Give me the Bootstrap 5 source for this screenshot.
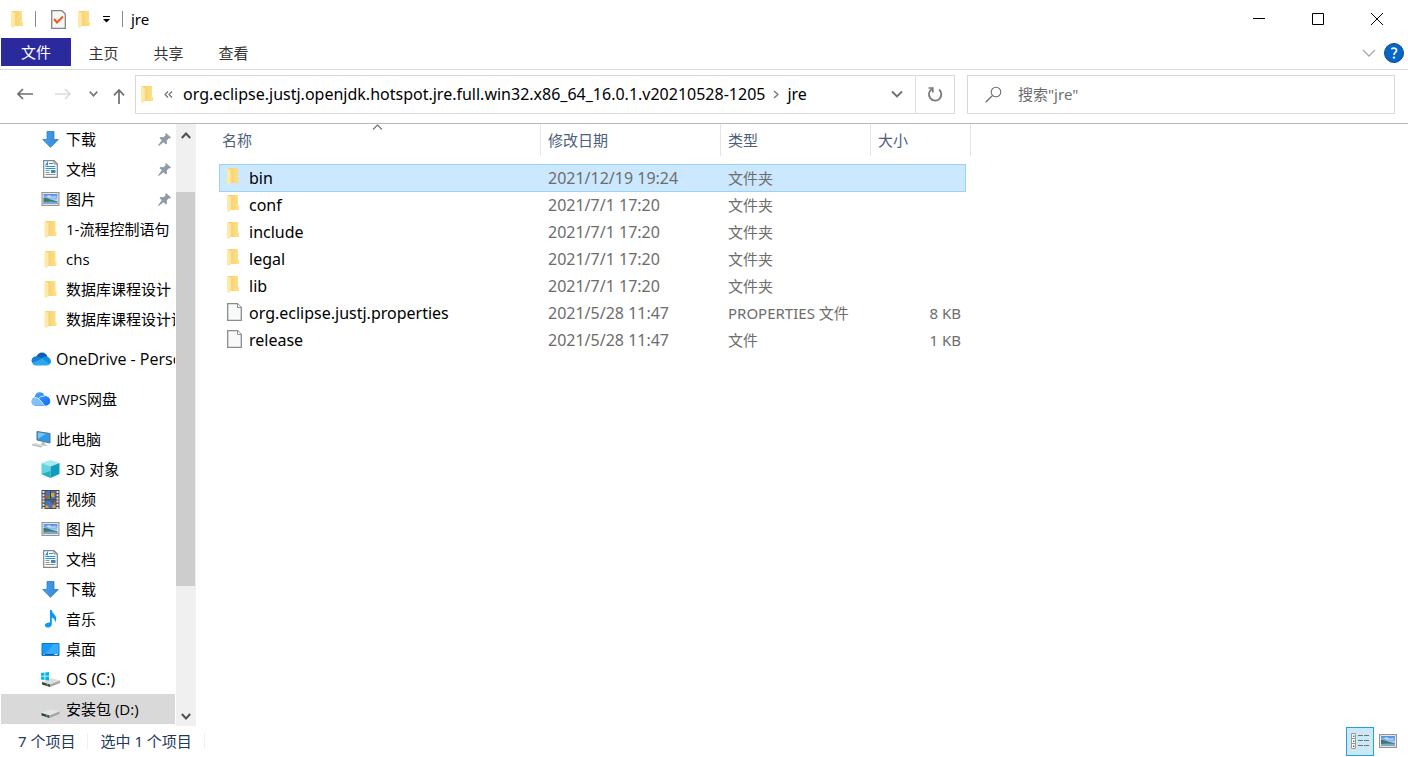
<!DOCTYPE html>
<html lang="zh-CN">
<head>
<meta charset="utf-8">
<meta name="viewport" content="width=device-width, initial-scale=1">
<title>jre</title>
<link rel="stylesheet" href="https://cdn.jsdelivr.net/npm/bootstrap@5.3.0/dist/css/bootstrap.min.css">
<script src="https://cdn.jsdelivr.net/npm/bootstrap@5.3.0/dist/js/bootstrap.bundle.min.js"></script>
<style>
body { font-family: "Noto Sans", "Noto Sans CJK SC", sans-serif; font-size: 15px; line-height: 20px; color: #000; background: #fff; overflow: hidden; }
svg { display: block; flex: none; }
button, input { font: inherit; color: inherit; }
.plain-btn { border: 0; padding: 0; background: none; display: flex; align-items: center; justify-content: center; }
.title-bar { height: 38px; padding-left: 10px; padding-right: 2px; }
.v-bar { width: 1px; height: 16px; background: #8a8a8a; }
.gap-a { margin-left: 11px; }
.gap-b { margin-left: 15px; }
.win-btn { width: 59px; height: 38px; }
.ribbon { height: 32px; padding-left: 1px; padding-right: 4px; border-bottom: 1px solid #dadbdc; }
.tab-link { height: 31px; padding-top: 5px; width: 65px; text-align: center; color: #333; text-decoration: none; }
.file-tab { background: #2a2a9c; color: #fff; width: 70px; height: 28px; padding-top: 4px; }
.ribbon-end { height: 30px; }
.nav-row { height: 54px; padding: 5px 13px 10px 12px; border-bottom: 1px solid #b9b9b9; }
.nav-back { width: 26px; } .nav-fwd { width: 50px; } .nav-recent { width: 11px; } .nav-up { width: 36px; }
.boxed { border: 1px solid #d9d9d9; height: 39px; }
.addr { width: 820px; }
.addr a { color: #000; text-decoration: none; }
.addr .crumb { margin-left: 10px; }
.latin { font-size: 16px; }
.refresh { width: 39px; border-left: 1px solid #d9d9d9; }
.search-box { margin-left: 12px; padding-left: 17px; gap: 16px; }
.search-input { border: 0; outline: 0; padding: 0; background: none; }
.search-input::placeholder { color: #6d6d6d; opacity: 1; }
.side { width: 175px; font-family: "Open Sans", "Noto Sans CJK SC", sans-serif; }
.side a { display: flex; align-items: center; height: 30px; padding-left: 40px; margin-left: 1px; color: #000; text-decoration: none; white-space: nowrap; overflow: hidden; }
.side a span { margin-left: 6px; }
.side a.root { padding-left: 30px; margin-top: 10px; }
.side a.root span { margin-left: 5px; }
.side a.current { background: #d9d9d9; }
.side .pin { margin-left: auto; margin-right: 4px; }
.scroller { width: 20px; margin: 0 0 1px 1px; padding: 8px 1px 6px 0; background: #f0f0f0; }
.thumb { background: #cdcdcd; height: 67%; margin-top: 53px; }
.pane { padding-left: 23px; }
.files { table-layout: fixed; width: 752px; border-collapse: separate; border-spacing: 0; }
.files th { height: 32px; padding: 0 0 0 7px; font-weight: 400; color: #4c607a; border-right: 1px solid #e5e5e5; }
.files th:first-child { padding-left: 3px; position: relative; }
.sort-mark { position: absolute; left: 153px; top: 0; }
.files td { height: 27px; padding: 0 0 0 7px; color: #6d6d6d; }
.files td:first-child { color: #000; padding-left: 8px; }
.files td:first-child svg { width: 15px; margin-right: 7px; }
.files td:first-child .fold { width: 12px; margin-right: 10px; }
.files td:first-child, .files td:nth-child(2) { font-size: 16px; }
.files td.size { text-align: right; padding: 0 5px 0 0; }
.files .gap td { height: 8px; }
.files .picked td { background: #cce8ff; box-shadow: inset 0 1px #99d1ff, 0 1px #99d1ff; }
.files .picked td:first-child { box-shadow: inset 0 1px #99d1ff, 0 1px #99d1ff, inset 1px 0 #99d1ff; }
.files .picked td.size { box-shadow: inset 0 1px #99d1ff, 0 1px #99d1ff, inset -1px 0 #99d1ff; }
.files .picked td.blank { background: none; box-shadow: none; }
.c-name { width: 322px; } .c-date { width: 180px; } .c-type { width: 150px; } .c-size { width: 95px; } .c-end { width: 5px; }
.status { height: 30px; color: #1e395b; padding: 0 10px 2px 18px; gap: 12px; }
.status .sep { width: 1px; height: 16px; background: #f0f0f0; }
.view-btn { width: 28px; height: 29px; }
.view-btn.on { background: #cbe8f6; border: 1px solid #26a0da; }
.thumb-btn { width: 24px; padding-left: 4px; }
</style>
</head>
<body class="vh-100 d-flex flex-column">
<svg width="0" height="0" class="position-absolute">
  <defs>
    <linearGradient id="gf" x2="1"><stop offset="0" stop-color="#f3cf6b"/><stop offset="1" stop-color="#ffe08a"/></linearGradient>
    <linearGradient id="gs" x2="0" y2="1"><stop offset="0" stop-color="#4d8fe8"/><stop offset="1" stop-color="#dff0fb"/></linearGradient>
    <linearGradient id="gd" x2="1"><stop offset="0" stop-color="#4ba3ee"/><stop offset="1" stop-color="#2f86d6"/></linearGradient>
    <linearGradient id="gw" x2="1" y2="1"><stop offset="0" stop-color="#4da9ff"/><stop offset="1" stop-color="#0f6df0"/></linearGradient>
  </defs>
  <symbol id="folder" viewBox="0 0 12 17"><path d="M1 0h10v11h1v4H1z" fill="url(#gf)"/><path d="M0 0l4 2v13l-2 2-2-1z" fill="#ffe9a6"/><path d="M4 2v13" stroke="#f7dc8c" stroke-width="1"/></symbol>
  <symbol id="page" viewBox="0 0 15 18"><path d="M.7.7h9.800l3.800 3.800v12.800H.7z" fill="#f8f9f9" stroke="#8c8c8c" stroke-width="1.300"/><path d="M10.500.7v3.800h3.800" fill="#fff" stroke="#8c8c8c"/></symbol>
  <symbol id="down" viewBox="0 0 17 17"><path d="M5 .5h7v8h4.300L8.500 16.300.7 8.500H5z" fill="url(#gd)" stroke="#2b7fca" stroke-width=".8"/></symbol>
  <symbol id="doc" viewBox="0 0 15 18"><path d="M.7.7h10.300l3.300 3.300v13.300H.7z" fill="#fff" stroke="#858585" stroke-width="1.200"/><path d="M11 .7V4h3.300" fill="none" stroke="#858585"/><path d="M2.500 5.500L4.500 2.500V5.500M6 3.500h4M2.500 6.500h10M2.500 8.500h10" stroke="#2196e0" stroke-width="1.100" fill="none"/><path d="M2.500 10.500h4M2.500 12.500h4M2.500 14.500h10" stroke="#8b9298"/><path d="M8 10h4.500v3H8z" fill="#3f86ac"/></symbol>
  <symbol id="pic" viewBox="0 0 18 14"><path d="M.6.6h16.800v12.800H.6z" fill="#fff" stroke="#949494" stroke-width="1.200"/><path d="M2 2h14v10H2z" fill="url(#gs)"/><path d="M2 6q4-.5 7 1.500l7 2V12H2z" fill="#44776f"/><path d="M2 10q6-1 14 0v2H2z" fill="#7ba9c8"/><path d="M5 4.500q2-2 4-.5t5 0v1.500H7z" fill="#fff" opacity=".65"/></symbol>
  <symbol id="pin" viewBox="0 0 13 13"><path d="M8 0l5 4.500-1.200 1-1-.3-2 2.300.2 3L8 11.500 5.600 9.200 1 12.800l-1 .2.300-1L3.800 7.300 1.500 5l1-1 3 .2 2.200-2L7.200.9z" fill="#8d9ba8"/></symbol>
  <symbol id="onedrive" viewBox="0 0 20 14"><path d="M5 5Q8-1 13 .8 16 2 16.500 5L10 9z" fill="#0a5fb4"/><path d="M1.500 11Q-1 7 3 4.800q2-1 4.500 0L13 8 3 13z" fill="#1680d8"/><path d="M10 7q3-3.500 7-2 3 1.500 3 5-1 3-3 3l-7-4z" fill="#1490df"/><path d="M1.500 11L11 6.500l7.500 5.500q-1 1.500-3 1.500h-11q-2 0-3-2.500z" fill="#2ba9ec"/></symbol>
  <symbol id="wps" viewBox="0 0 19 14"><path d="M3 5.500Q4 0 8.500.2 12 .5 13 4q5 0 5.800 4.500.2 4.500-4.500 5.200H4Q0 13 .1 9.500.5 6 3 5.500z" fill="url(#gw)"/><path d="M3 5.500q4-.2 6 3l4 5H4Q0 13 .1 9.500.5 6 3 5.500z" fill="#7fc0ff"/><path d="M3 5.500q4-.2 6 3l4 5M7 6.500q2-3 6-2.500" fill="none" stroke="#e4f3ff" stroke-width=".9"/></symbol>
  <symbol id="pc" viewBox="0 0 20 17"><path d="M6 .5l13 2v9.500l-13-3z" fill="#2f9ae6" stroke="#55718b"/><path d="M7 1.500l8 1.200-8 5z" fill="#74c6fb"/><path d="M11 10.500l3 .8v2l3 1-3 .7-4-1.500z" fill="#b9c2ca"/><path d="M0 13.500l4-1.500 10 2.500-4 2z" fill="#d4d9dd"/><path d="M1 13.700l9 2.300" stroke="#aab2b8"/></symbol>
  <symbol id="cube" viewBox="0 0 18 18"><path d="M0 3l9-3 9 3-9 3.500z" fill="#a6eaf1"/><path d="M0 3l9 3.500V18L0 14z" fill="#62d3e0"/><path d="M18 3L9 6.500V18l9-4z" fill="#109dbd"/><path d="M0 14l9-3v7z" fill="#27aebf"/></symbol>
  <symbol id="film" viewBox="0 0 18 19"><path d="M0 0h18v19H0z" fill="#4d4d4d"/><path d="M2 1v18M16 1v18" stroke="#e6e6e6" stroke-width="2" stroke-dasharray="2 1.200"/><path d="M4 1h10v8H4zM4 10.500h10V18H4z" fill="#4474c4"/><path d="M9 3h4v4H9z" fill="#e3a51d"/><path d="M4 5h3v3H4z" fill="#d04b3a"/><path d="M7 6h3v3H7z" fill="#3aa35c"/><path d="M9 11h4v1l-2 2z" fill="#b72c25"/><path d="M4 15l3 1v2H4zM11 15h3v3h-3z" fill="#e3a51d"/><path d="M9 1v8" stroke="#202020" stroke-width=".7"/></symbol>
  <symbol id="note" viewBox="0 0 12 18"><path d="M5.500 0h1.800q.2 2.500 2.500 4.500 3.500 3 .8 8-.2-4-3.300-5v7.200Q6.500 17.500 3 17.500 0 17 .5 14.500q1.500-2.500 5-2z" fill="#0d99f2"/></symbol>
  <symbol id="desk" viewBox="0 0 18 13"><path d="M.5.500h17v12H.5z" fill="#149bf8" stroke="#0b78cc"/><path d="M12 1l5 0v10H4z" fill="#38acfb"/><path d="M1 11.500h16" stroke="#0b5c9e"/><path d="M2 11.500h1M13 11.500h3" stroke="#fff"/></symbol>
  <symbol id="drive" viewBox="0 0 18 9"><path d="M0 4l9-4 9 2.500-10 4z" fill="#e4e4e4"/><path d="M0 4l8 2.500V9L0 6.500z" fill="#3b403c"/><path d="M8 6.500l10-4V5L8 9z" fill="#a5a5a5"/><path d="M4.500 6.500l1.500.5" stroke="#45e04d" stroke-width="1.200"/></symbol>
  <symbol id="osdrive" viewBox="0 0 19 15"><g transform="translate(1 6)"><path d="M0 4l9-4 9 2.500-10 4z" fill="#dedede"/><path d="M0 4l8 2.500V9L0 6.500z" fill="#3b403c"/><path d="M8 6.500l10-4V5L8 9z" fill="#a5a5a5"/><path d="M4.500 6.500l1.500.5" stroke="#45e04d" stroke-width="1.200"/></g><path d="M0 1l3.500-.5v3.300H0zM4.300.4L8 0v3.800H4.300zM0 4.600h3.500v3.300L0 7.400zM4.300 4.600H8v3.800l-3.700-.5z" fill="#00b3f0"/></symbol>
</svg>

<header>
  <div class="title-bar d-flex align-items-center">
    <svg width="14" height="17"><use href="#folder"/></svg>
    <div class="v-bar gap-a"></div>
    <button class="plain-btn gap-b" aria-label="属性"><svg width="15" height="19" viewBox="0 0 15 19"><path d="M.7.7h10.300l3.300 3.300v14.300H.7z" fill="#f6f6f6" stroke="#858585" stroke-width="1.300"/><path d="M3 9l3 3.500 6-6" fill="none" stroke="#f0581c" stroke-width="2"/></svg></button>
    <button class="plain-btn gap-a" aria-label="新建文件夹"><svg width="14" height="17"><use href="#folder"/></svg></button>
    <button class="plain-btn gap-a" aria-label="自定义"><svg width="9" height="9" viewBox="0 0 9 9"><path d="M1 1.500h7" stroke="#000"/><path d="M1 4h7L4.500 7.500z"/></svg></button>
    <div class="v-bar gap-a"></div>
    <span class="ms-2">jre</span>
    <div class="ms-auto d-flex">
      <button class="plain-btn win-btn" aria-label="最小化"><svg width="12" height="12" viewBox="0 0 12 12"><path d="M0 5.500h12" stroke="#000"/></svg></button>
      <button class="plain-btn win-btn" aria-label="最大化"><svg width="12" height="12" viewBox="0 0 12 12"><path d="M.5.500h11v11H.5z" fill="none" stroke="#000"/></svg></button>
      <button class="plain-btn win-btn" aria-label="关闭"><svg width="12" height="12" viewBox="0 0 12 12"><path d="M0 0l12 12M12 0L0 12" stroke="#000"/></svg></button>
    </div>
  </div>
  <nav class="ribbon d-flex">
    <a href="#" class="tab-link file-tab">文件</a>
    <a href="#" class="tab-link">主页</a>
    <a href="#" class="tab-link">共享</a>
    <a href="#" class="tab-link">查看</a>
    <div class="ribbon-end ms-auto d-flex align-items-center gap-2">
      <button class="plain-btn" aria-label="展开功能区"><svg width="14" height="8" viewBox="0 0 14 8"><path d="M1 1l6 6 6-6" fill="none" stroke="#a9a9a9" stroke-width="1.300"/></svg></button>
      <button class="plain-btn" aria-label="帮助"><svg width="20" height="20" viewBox="0 0 20 20"><circle cx="10" cy="10" r="9.500" fill="#0667c8" stroke="#0b4f96"/><path d="M7.300 6q2.200-1.500 4.200-.5 2 1.500.3 3.500-1.800 1.300-1.800 3" fill="none" stroke="#fff" stroke-width="1.700"/><circle cx="10" cy="14.600" r="1.200" fill="#fff"/></svg></button>
    </div>
  </nav>
  <div class="nav-row d-flex align-items-center">
    <button class="plain-btn nav-back" aria-label="后退"><svg width="16" height="12" viewBox="0 0 16 12"><path d="M1 6h15M6 1L1 6l5 5" fill="none" stroke="#6f6f6f" stroke-width="1.700"/></svg></button>
    <button class="plain-btn nav-fwd" aria-label="前进"><svg width="16" height="12" viewBox="0 0 16 12"><path d="M0 6h15M10 1l5 5-5 5" fill="none" stroke="#dcdcdc" stroke-width="1.700"/></svg></button>
    <button class="plain-btn nav-recent" aria-label="最近位置"><svg width="9" height="6" viewBox="0 0 9 6"><path d="M.7.7l3.800 4L8.300.7" fill="none" stroke="#7a7a7a" stroke-width="1.700"/></svg></button>
    <button class="plain-btn nav-up" aria-label="上移"><svg class="mt-1 ms-1" width="12" height="15" viewBox="0 0 12 15"><path d="M6 15V1M1 6.300L6 1l5 5.300" fill="none" stroke="#6f6f6f" stroke-width="1.700"/></svg></button>
    <div class="boxed addr d-flex align-items-center">
      <svg class="ms-1" width="14" height="17"><use href="#folder"/></svg>
      <svg class="crumb" width="9" height="7" viewBox="0 0 9 7"><path d="M4 .5l-3 3 3 3M8 .5l-3 3 3 3" fill="none" stroke="#6f6f6f" stroke-width="1.200"/></svg>
      <a href="#" class="crumb latin">org.eclipse.justj.openjdk.hotspot.jre.full.win32.x86_64_16.0.1.v20210528-1205</a>
      <svg class="ms-2" width="6" height="9" viewBox="0 0 6 9"><path d="M1 1l4 3.500L1 8" fill="none" stroke="#7a7a7a" stroke-width="1.500"/></svg>
      <a href="#" class="ms-2 latin">jre</a>
      <button class="plain-btn ms-auto me-2 p-1" aria-label="以前的位置"><svg width="12" height="8" viewBox="0 0 12 8"><path d="M1 1.500l5 5 5-5" fill="none" stroke="#6f6f6f" stroke-width="1.800"/></svg></button>
      <button class="plain-btn refresh border-start align-self-stretch" aria-label="刷新"><svg width="16" height="16" viewBox="0 0 16 16"><path d="M12 3.500A6.200 6.200 0 1 1 5 3" fill="none" stroke="#7a7a7a" stroke-width="1.800"/><path d="M1.500 2h4.300v4.500" fill="none" stroke="#7a7a7a" stroke-width="1.700"/></svg></button>
    </div>
    <label class="boxed search-box flex-grow-1 d-flex align-items-center">
      <svg width="17" height="17" viewBox="0 0 17 17"><circle cx="11" cy="6" r="4.800" fill="none" stroke="#6f6f6f" stroke-width="1.100"/><path d="M7.500 9.500L.7 16.200" stroke="#6f6f6f" stroke-width="1.300"/></svg>
      <input class="search-input flex-grow-1" type="text" placeholder='搜索"jre"' aria-label="搜索">
    </label>
  </div>
</header>

<main class="flex-grow-1 d-flex overflow-hidden">
  <nav class="side">
    <a href="#"><svg width="19" height="17"><use href="#down"/></svg><span>下载</span><svg class="pin" width="13" height="13"><use href="#pin"/></svg></a>
    <a href="#"><svg width="19" height="18"><use href="#doc"/></svg><span>文档</span><svg class="pin" width="13" height="13"><use href="#pin"/></svg></a>
    <a href="#"><svg width="19" height="14"><use href="#pic"/></svg><span>图片</span><svg class="pin" width="13" height="13"><use href="#pin"/></svg></a>
    <a href="#"><svg width="19" height="17"><use href="#folder"/></svg><span>1-流程控制语句</span></a>
    <a href="#"><svg width="19" height="17"><use href="#folder"/></svg><span>chs</span></a>
    <a href="#"><svg width="19" height="17"><use href="#folder"/></svg><span>数据库课程设计</span></a>
    <a href="#"><svg width="19" height="17"><use href="#folder"/></svg><span>数据库课程设计设</span></a>
    <a href="#" class="root"><svg width="20" height="14"><use href="#onedrive"/></svg><span class="latin">OneDrive - Perso</span></a>
    <a href="#" class="root"><svg width="20" height="14"><use href="#wps"/></svg><span>WPS网盘</span></a>
    <a href="#" class="root"><svg width="20" height="17"><use href="#pc"/></svg><span>此电脑</span></a>
    <a href="#"><svg width="19" height="18"><use href="#cube"/></svg><span>3D 对象</span></a>
    <a href="#"><svg width="19" height="19"><use href="#film"/></svg><span>视频</span></a>
    <a href="#"><svg width="19" height="14"><use href="#pic"/></svg><span>图片</span></a>
    <a href="#"><svg width="19" height="18"><use href="#doc"/></svg><span>文档</span></a>
    <a href="#"><svg width="19" height="17"><use href="#down"/></svg><span>下载</span></a>
    <a href="#"><svg width="19" height="18"><use href="#note"/></svg><span>音乐</span></a>
    <a href="#"><svg width="19" height="13"><use href="#desk"/></svg><span>桌面</span></a>
    <a href="#"><svg width="19" height="15"><use href="#osdrive"/></svg><span class="latin">OS (C:)</span></a>
    <a href="#" class="current"><svg class="mt-2" width="19" height="9"><use href="#drive"/></svg><span>安装包 (D:)</span></a>
  </nav>
  <div class="scroller d-flex flex-column">
    <svg class="mx-auto" width="10" height="7" viewBox="0 0 10 7"><path d="M.8 6L5 1.500 9.200 6" fill="none" stroke="#505050" stroke-width="2"/></svg>
    <div class="thumb"></div>
    <svg class="mx-auto mt-auto" width="10" height="7" viewBox="0 0 10 7"><path d="M.8 1L5 5.500 9.200 1" fill="none" stroke="#505050" stroke-width="2"/></svg>
  </div>
  <section class="pane flex-grow-1">
    <table class="files">
      <colgroup><col class="c-name"><col class="c-date"><col class="c-type"><col class="c-size"><col class="c-end"></colgroup>
      <thead><tr><th>名称<svg class="sort-mark" width="11" height="7" viewBox="0 0 11 7"><path d="M1 5.500l4.500-4.500L10 5.500" fill="none" stroke="#6f6f6f" stroke-width="1.100"/></svg></th><th>修改日期</th><th>类型</th><th colspan="2">大小</th></tr></thead>
      <tbody>
        <tr class="gap"><td colspan="5"></td></tr>
        <tr class="picked"><td><div class="d-flex"><svg class="fold" height="17"><use href="#folder"/></svg><span>bin</span></div></td><td>2021/12/19 19:24</td><td>文件夹</td><td class="size"></td><td class="blank"></td></tr>
        <tr><td><div class="d-flex"><svg class="fold" height="17"><use href="#folder"/></svg><span>conf</span></div></td><td>2021/7/1 17:20</td><td>文件夹</td><td class="size"></td><td></td></tr>
        <tr><td><div class="d-flex"><svg class="fold" height="17"><use href="#folder"/></svg><span>include</span></div></td><td>2021/7/1 17:20</td><td>文件夹</td><td class="size"></td><td></td></tr>
        <tr><td><div class="d-flex"><svg class="fold" height="17"><use href="#folder"/></svg><span>legal</span></div></td><td>2021/7/1 17:20</td><td>文件夹</td><td class="size"></td><td></td></tr>
        <tr><td><div class="d-flex"><svg class="fold" height="17"><use href="#folder"/></svg><span>lib</span></div></td><td>2021/7/1 17:20</td><td>文件夹</td><td class="size"></td><td></td></tr>
        <tr><td><div class="d-flex"><svg height="18"><use href="#page"/></svg><span>org.eclipse.justj.properties</span></div></td><td>2021/5/28 11:47</td><td>PROPERTIES 文件</td><td class="size">8 KB</td><td></td></tr>
        <tr><td><div class="d-flex"><svg height="18"><use href="#page"/></svg><span>release</span></div></td><td>2021/5/28 11:47</td><td>文件</td><td class="size">1 KB</td><td></td></tr>
      </tbody>
    </table>
  </section>
</main>

<footer class="status d-flex align-items-center">
  <span>7 个项目</span>
  <div class="sep"></div>
  <span>选中 1 个项目</span>
  <div class="sep"></div>
  <div class="ms-auto d-flex align-items-center">
    <button class="plain-btn view-btn on" aria-label="详细信息"><svg width="20" height="18" viewBox="0 0 20 18"><path d="M1.500 1.500h4v15h-4zM1.500 6.500h4M1.500 11.500h4" fill="#fff" stroke="#999"/><path d="M3 3.500h1.500v1.500H3z" fill="#3c7aa8"/><path d="M3 8.500h1.500v1.500H3z" fill="#3f9b68"/><path d="M3 13.500h1.500v1.500H3z" fill="#d33a22"/><path d="M8 3.500h5M14 3.500h5M8 8.500h5M14 8.500h5M8 13.500h5M14 13.500h5" stroke="#737373"/></svg></button>
    <button class="plain-btn thumb-btn" aria-label="大缩略图"><svg width="18" height="14"><use href="#pic"/></svg></button>
  </div>
</footer>
</body>
</html>
